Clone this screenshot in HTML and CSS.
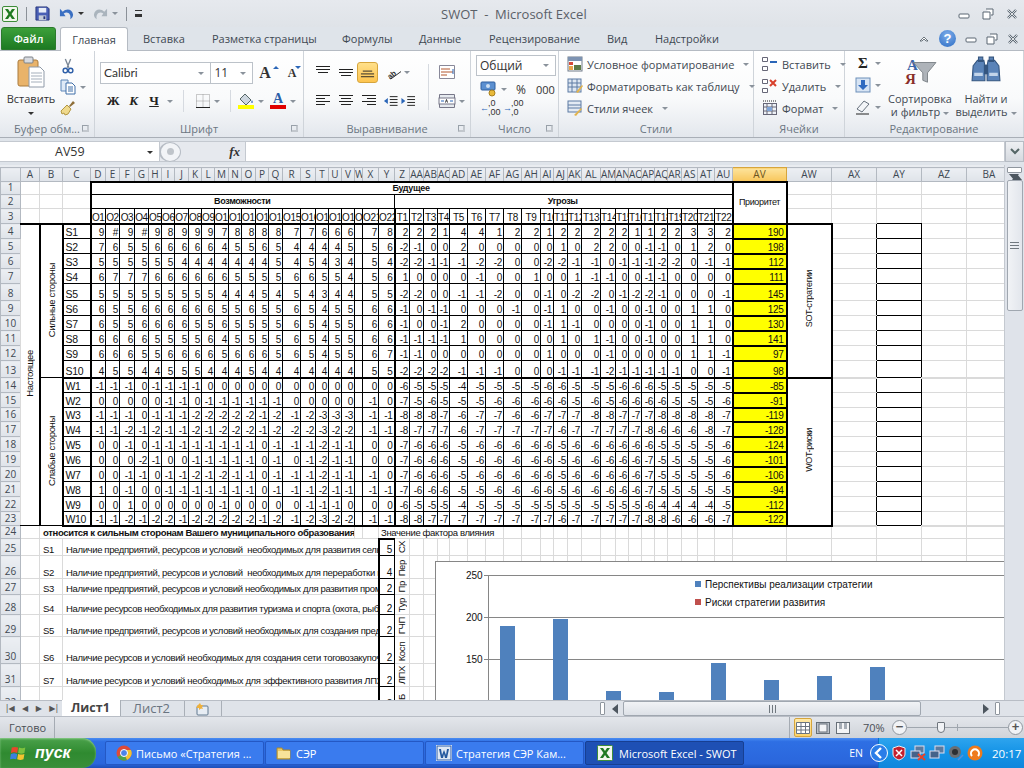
FILE: index.html
```html
<!DOCTYPE html>
<html lang="ru">
<head>
<meta charset="utf-8">
<title>SWOT - Microsoft Excel</title>
<link rel="stylesheet" href="styles.css">
</head>
<body>
<div class="app">
<header class="titlebar">
  <div class="qat">
    <svg class="xl" viewBox="0 0 16 16"><rect x=".5" y=".5" width="15" height="15" rx="1.5" fill="#f2f7ee" stroke="#3d8c3a"/><path d="M3 3h3l2 3 2-3h3l-3.500 5L13 13h-3l-2-3-2 3H3l3.500-5z" fill="#1f7a22"/></svg>
    <i class="qsep"></i>
    <svg class="ic14" viewBox="0 0 16 16"><path d="M1 1h12l2 2v12H1z" fill="#4a5fb5" stroke="#27357c"/><rect x="4" y="2" width="8" height="5" fill="#e9eef8"/><rect x="4" y="10" width="8" height="5" fill="#c6ccd8"/><rect x="9" y="11" width="2" height="3" fill="#27357c"/></svg>
    <svg class="ic18" viewBox="0 0 18 16"><path d="M5 6c4-4 10-3 11 3 0 2-1 4-3 5 1-4-1-7-4-7-1 0-2 .5-3 1l2 3H2V3z" fill="#3a6fc2"/></svg>
    <i class="drop dark"></i>
    <svg class="ic18 faded" viewBox="0 0 18 16"><path d="M13 6C9 2 3 3 2 9c0 2 1 4 3 5-1-4 1-7 4-7 1 0 2 .5 3 1l-2 3h6V3z" fill="#aab4bd"/></svg>
    <i class="drop"></i>
    <i class="qsep"></i>
    <span class="qmore"></span>
  </div>
  <div class="wintitle">SWOT&nbsp; -&nbsp; Microsoft Excel</div>
  <div class="winbtns">
    <svg viewBox="0 0 12 12"><rect x="1" y="6" width="10" height="4" rx="1" fill="#fff" stroke="#5a6672"/></svg>
    <svg viewBox="0 0 12 12"><path d="M4 1h7v6H9M1 4h7v7H1z" fill="#fff" stroke="#5a6672"/></svg>
    <svg viewBox="0 0 12 12"><path d="M2 2l8 8M10 2l-8 8" stroke="#5a6672" stroke-width="2.400"/><path d="M2 2l8 8M10 2l-8 8" stroke="#fff" stroke-width=".8"/></svg>
  </div>
</header>
<nav class="tabs">
  <span class="file">Файл</span>
  <span class="tab active">Главная</span>
  <span class="tab t1">Вставка</span>
  <span class="tab t2">Разметка страницы</span>
  <span class="tab t3">Формулы</span>
  <span class="tab t4">Данные</span>
  <span class="tab t5">Рецензирование</span>
  <span class="tab t6">Вид</span>
  <span class="tab t7">Надстройки</span>
  <div class="tabright">
    <svg class="caret" viewBox="0 0 10 8"><path d="M1 6l4-4 4 4-2 0-2-2-2 2z" fill="#fff" stroke="#4a5560" stroke-width=".8"/></svg>
    <span class="help">?</span>
    <svg class="smallwin" viewBox="0 0 12 12"><rect x="1" y="5" width="10" height="4" rx="1" fill="#fff" stroke="#5a6672"/></svg>
    <svg class="smallwin" viewBox="0 0 12 12"><path d="M4 1h7v6H9M1 4h7v7H1z" fill="#fff" stroke="#5a6672"/></svg>
    <svg class="smallwin" viewBox="0 0 12 12"><path d="M2 2l8 8M10 2l-8 8" stroke="#5a6672" stroke-width="2.400"/><path d="M2 2l8 8M10 2l-8 8" stroke="#fff" stroke-width=".8"/></svg>
  </div>
</nav>
<section class="ribbon">
  <div class="grp g-clip">
    <div class="body clip">
      <div class="paste">
        <svg class="pasteic" viewBox="0 0 28 32"><rect x="1" y="4" width="20" height="26" rx="2" fill="#e9b36a" stroke="#a97a3c"/><rect x="7" y="1" width="9" height="6" rx="1" fill="#d8dbe0" stroke="#7d8288"/><path d="M12 11h11l4 4v16H12z" fill="#fff" stroke="#8f9aa8"/><path d="M14 17h11M14 20h11M14 23h11M14 26h11" stroke="#a5afbb"/></svg>
        <span class="plabel">Вставить</span>
        <i class="drop dark"></i>
      </div>
      <div class="clipcol">
        <svg class="ic16" viewBox="0 0 16 18"><path d="M5 1l4 10M11 1L7 11" stroke="#7a8796" stroke-width="1.500"/><circle cx="5" cy="14" r="2.500" fill="none" stroke="#2e5fa8" stroke-width="1.600"/><circle cx="11" cy="14" r="2.500" fill="none" stroke="#2e5fa8" stroke-width="1.600"/></svg>
        <div class="row2"><svg class="ic16" viewBox="0 0 16 16"><path d="M1 1h7v11H1z" fill="#dfeaf7" stroke="#5c86b8"/><path d="M6 4h6l3 3v8H6z" fill="#fff" stroke="#3f6ea8"/><path d="M8 8h5M8 10h5M8 12h5" stroke="#3f6ea8"/></svg><i class="drop"></i></div>
        <svg class="ic16" viewBox="0 0 16 16"><path d="M9 6l4-5 2 2-5 4z" fill="#8e6e38"/><path d="M1 11l6-6 4 4-3 5-3 1-1-2-2 1z" fill="#efd98c" stroke="#b39742"/></svg>
      </div>
    </div>
    <div class="glabel">Буфер обм...<b class="launch"></b></div>
  </div>
  <div class="grp g-font">
    <div class="body stack">
      <div class="line">
        <span class="combo fname">Calibri<i class="drop"></i></span>
        <span class="combo fsize">11<i class="drop"></i></span>
        <span class="bigA">A<sup class="up"></sup></span>
        <span class="bigA small">A<sup class="down"></sup></span>
      </div>
      <div class="line l2">
        <span class="fb bb">Ж</span>
        <span class="fb ii">К</span>
        <span class="fb uu">Ч</span><i class="drop"></i>
        <i class="vsep"></i>
        <svg class="ic16 bord" viewBox="0 0 16 16"><path d="M1.500 1.500h13v13h-13zM8 1.500v13M1.500 8h13" fill="none" stroke="#999" stroke-dasharray="1 1"/><path d="M1 14.500h14" stroke="#222"/></svg><i class="drop"></i>
        <i class="vsep"></i>
        <span class="swatch"><svg class="ic16" viewBox="0 0 16 12"><path d="M7 1l6 6-5 5-6-6z" fill="#cdd6df" stroke="#566"/><path d="M14 7c1 2 1 3 0 3s-1-1 0-3z" fill="#2b66b8"/></svg><b class="yel"></b></span><i class="drop"></i>
        <span class="swatch"><span class="colA">A</span><b class="red"></b></span><i class="drop"></i>
      </div>
    </div>
    <div class="glabel">Шрифт<b class="launch"></b></div>
  </div>
  <div class="grp g-align">
    <div class="body aligngrid">
      <svg class="ai" viewBox="0 0 16 16"><path d="M1 2.500h14M1 5.500h14M3 8.500h10" stroke="#222"/></svg>
      <svg class="ai" viewBox="0 0 16 16"><path d="M1 5.500h14M1 8.500h14M3 11.500h10" stroke="#222"/></svg>
      <span class="ai on"><svg viewBox="0 0 16 16"><path d="M3 6.500h10M1 9.500h14M1 12.500h14" stroke="#222"/></svg></span>
      <span class="orient"><svg viewBox="0 0 18 16"><text x="1" y="12" class="ortext" transform="rotate(-40 8 8)">ab</text><path d="M6 15l11-8" stroke="#222"/></svg><i class="drop"></i></span>
      <i class="vsep tall"></i>
      <svg class="wrapic" viewBox="0 0 18 16"><path d="M1.500 1.500h15v13h-15z" fill="#fff" stroke="#889"/><path d="M3 5h9M3 8h12M3 11h6" stroke="#b3562e"/><path d="M15 5v5" stroke="#2b66b8"/></svg>
      <svg class="ai" viewBox="0 0 16 16"><path d="M1 2.500h14M1 5.500h9M1 8.500h14M1 11.500h9" stroke="#222"/></svg>
      <svg class="ai" viewBox="0 0 16 16"><path d="M1 2.500h14M3 5.500h10M1 8.500h14M3 11.500h10" stroke="#222"/></svg>
      <svg class="ai" viewBox="0 0 16 16"><path d="M1 2.500h14M6 5.500h9M1 8.500h14M6 11.500h9" stroke="#222"/></svg>
      <span class="indent"><svg viewBox="0 0 34 16"><path d="M7 3.500h8M7 6.500h8M7 9.500h8M7 12.500h8M25 3.500h8M25 6.500h8M25 9.500h8M25 12.500h8" stroke="#222"/><path d="M1 8l4-3v6zM23 8l-4-3v6z" fill="#2b66b8"/></svg></span>
      <span class="merge"><svg viewBox="0 0 18 16"><path d="M1.500 1.500h15v13h-15z" fill="#e6eaef" stroke="#778"/><rect x="1" y="5" width="16" height="6" fill="#fff" stroke="#778"/><path d="M3 8h3M12 8h3" stroke="#2b66b8"/><path d="M7.500 9.500l1-3 1 3" fill="none" stroke="#333"/></svg><i class="drop"></i></span>
    </div>
    <div class="glabel">Выравнивание<b class="launch"></b></div>
  </div>
  <div class="grp g-num">
    <div class="body stack numstack">
      <span class="combo fmt">Общий<i class="drop"></i></span>
      <div class="line numline">
        <span class="money"><svg class="ic16" viewBox="0 0 16 16"><rect x="1" y="1" width="14" height="8" rx="1" fill="#5b8fd0" stroke="#2f5f9f"/><circle cx="8" cy="5" r="2" fill="#cfe0f2"/><circle cx="12" cy="12" r="3" fill="#e8b93a" stroke="#a9801e"/></svg><i class="drop"></i></span>
        <span class="pct">%</span>
        <span class="thou">000</span>
      </div>
      <div class="line decs">
        <span class="dec"><em class="arrw">←</em><span class="dnum">,0<br>,00</span></span>
        <span class="dec"><em class="arrw">→</em><span class="dnum">,00<br>,0</span></span>
      </div>
    </div>
    <div class="glabel">Число<b class="launch"></b></div>
  </div>
  <div class="grp g-styles">
    <div class="body list">
      <div class="item"><svg class="ic16" viewBox="0 0 16 16"><rect x="1" y="1" width="14" height="14" fill="#fff" stroke="#6f7a88"/><rect x="1" y="1" width="14" height="4" fill="#7d93b2"/><rect x="2" y="6" width="4" height="3" fill="#d64a3a"/><rect x="2" y="10" width="4" height="4" fill="#e9a64a"/><rect x="7" y="9" width="7" height="5" fill="#5c7a47"/></svg>Условное форматирование<i class="drop"></i></div>
      <div class="item"><svg class="ic16" viewBox="0 0 16 16"><rect x="1" y="1" width="13" height="13" fill="#dde6f1" stroke="#5d7ba3"/><path d="M1 5h13M1 9h13M5 1v13M10 1v13" stroke="#5d7ba3"/><path d="M9 14l6-7 1 1-5 7z" fill="#e3b44c"/></svg>Форматировать как таблицу<i class="drop"></i></div>
      <div class="item"><svg class="ic16" viewBox="0 0 16 16"><rect x="1" y="1" width="13" height="11" fill="#e3eaf3" stroke="#5d7ba3"/><path d="M1 5h13M1 8h13" stroke="#5d7ba3"/><path d="M7 15l7-7 1 1-6 7z" fill="#e3b44c"/></svg>Стили ячеек<i class="drop"></i></div>
    </div>
    <div class="glabel">Стили</div>
  </div>
  <div class="grp g-cells">
    <div class="body list">
      <div class="item"><svg class="ic16" viewBox="0 0 16 16"><path d="M.5 1.500h5v4h-5zM.5 10.500h5v4h-5z" fill="#fff" stroke="#667"/><path d="M8 6h7" stroke="#2b66b8" stroke-width="2"/></svg>Вставить<i class="drop"></i></div>
      <div class="item"><svg class="ic16" viewBox="0 0 16 16"><path d="M.5 1.500h5v4h-5zM.5 10.500h5v4h-5z" fill="#fff" stroke="#667"/><path d="M8 2l6 6M14 2L8 8" stroke="#d8402c" stroke-width="2"/></svg>Удалить<i class="drop"></i></div>
      <div class="item"><svg class="ic16" viewBox="0 0 16 16"><rect x="1.500" y="3.500" width="13" height="11" fill="#eef2f7" stroke="#667"/><path d="M5 3v12M10 3v12M1 7h14M1 11h14" stroke="#667"/><path d="M1 1h14" stroke="#222" stroke-dasharray="1 1"/><rect x="5" y="7" width="5" height="4" fill="#7fa5d8"/></svg>Формат<i class="drop"></i></div>
    </div>
    <div class="glabel">Ячейки</div>
  </div>
  <div class="grp g-edit">
    <div class="body editbody">
      <div class="clipcol editcol">
        <div class="row2"><span class="sigma">Σ</span><i class="drop"></i></div>
        <div class="row2"><svg class="ic16" viewBox="0 0 16 16"><rect x="1" y="1" width="14" height="14" fill="#d7e4f4" stroke="#6d8fb9"/><path d="M6 3h4v5h3l-5 5-5-5h3z" fill="#2f6ac0"/></svg><i class="drop"></i></div>
        <div class="row2"><svg class="ic16" viewBox="0 0 16 16"><path d="M2 10l7-8 5 3-7 8z" fill="#f3f5f8" stroke="#66707c"/><path d="M1 15h13" stroke="#222"/></svg><i class="drop"></i></div>
      </div>
      <div class="bigbtn">
        <svg class="bigic" viewBox="0 0 34 32"><text x="3" y="16" class="sort a">А</text><text x="1" y="31" class="sort y">Я</text><path d="M10 8h24l-9 11v10l-5-2V19z" fill="#aeb3b9" stroke="#7c8288"/></svg>
        <span class="bl">Сортировка<br>и фильтр<i class="drop"></i></span>
      </div>
      <div class="bigbtn">
        <svg class="bigic" viewBox="0 0 30 28"><path d="M8 2h4v4H8zM18 2h4v4h-4zM3 10l4-5h6l1 5v14H2zM27 10l-4-5h-6l-1 5v14h12z" fill="#5a83b8" stroke="#34557f"/><rect x="13" y="9" width="4" height="9" fill="#34557f"/><path d="M4 18h8M18 18h8" stroke="#c3d5ea" stroke-width="3"/></svg>
        <span class="bl">Найти и<br>выделить<i class="drop"></i></span>
      </div>
    </div>
    <div class="glabel">Редактирование</div>
  </div>
</section>
<div class="fbar">
  <div class="namebox">AV59<i class="drop dark"></i></div>
  <div class="fxzone"><span class="pill"><i></i></span><em class="fx">fx</em></div>
  <div class="finput"></div>
  <div class="fexp"><svg viewBox="0 0 10 8"><path d="M1 1l4 4 4-4" fill="none" stroke="#566" stroke-width="2"/></svg></div>
</div>
<main class="sheet">
<div class="gridwrap">
<table class="grid">
<colgroup>
<col class="w20"><col class="w19"><col class="w23"><col class="w28">
<col class="w15"><col class="w14"><col class="w15"><col class="w14"><col class="w13"><col class="w13"><col class="w14"><col class="w13"><col class="w13"><col class="w14"><col class="w13"><col class="w14"><col class="w13"><col class="w14"><col class="w18"><col class="w15"><col class="w13"><col class="w13"><col class="w13"><col class="w8"><col class="w16"><col class="w16">
<col class="w15"><col class="w14"><col class="w14"><col class="w12"><col class="w18"><col class="w18"><col class="w18"><col class="w18"><col class="w19"><col class="w13"><col class="w14"><col class="w14"><col class="w19"><col class="w15"><col class="w13"><col class="w13"><col class="w13"><col class="w13"><col class="w14"><col class="w16"><col class="w17"><col class="w18">
<col class="w54"><col class="w45"><col class="w45"><col class="w45"><col class="w45"><col class="w45">
</colgroup>
<thead>
<tr class="h14"><th class="corner"><th>A<th>B<th>C<th>D<th>E<th>F<th>G<th>H<th>I<th>J<th>K<th>L<th>M<th>N<th>O<th>P<th>Q<th>R<th>S<th>T<th>U<th>V<th>W<th>X<th>Y<th>Z<th>AA<th>AB<th>AC<th>AD<th>AE<th>AF<th>AG<th>AH<th>AI<th>AJ<th>AK<th>AL<th>AM<th>AN<th>AO<th>AP<th>AQ<th>AR<th>AS<th>AT<th>AU<th class="sel">AV<th>AW<th>AX<th>AY<th>AZ<th>BA</tr>
</thead>
<tbody>
<tr class="h13"><th>1<td class="g"><td class="g"><td class="g"><td colspan="44" class="head l top">Будущее<td rowspan="3" class="pri">Приоритет<td class="g"><td class="g"><td class="g"><td class="g"><td class="g"></tr>
<tr class="h14"><th>2<td class="g"><td class="g"><td class="g"><td colspan="22" class="head l">Возможности<td colspan="22" class="head">Угрозы<td class="g"><td class="g"><td class="g"><td class="g"><td class="g"></tr>
<tr class="h15 r3"><th>3<td class="g kb"><td class="g kb"><td class="g kb"><td class="c l">O1<td class="c">O2<td class="c">O3<td class="c">O4<td class="c">O5<td class="c">O6<td class="c">O7<td class="c">O8<td class="c">O9<td class="c">O10<td class="c">O11<td class="c">O12<td class="c">O13<td class="c">O14<td class="c">O15<td class="c">O16<td class="c">O17<td class="c">O18<td class="c">O19<td class="c">O20<td class="c">O21<td class="c">O22<td class="c l">T1<td class="c">T2<td class="c">T3<td class="c">T4<td class="c">T5<td class="c">T6<td class="c">T7<td class="c">T8<td class="c">T9<td class="c">T10<td class="c">T11<td class="c">T12<td class="c">T13<td class="c">T14<td class="c">T15<td class="c">T16<td class="c">T17<td class="c">T18<td class="c">T19<td class="c">T20<td class="c">T21<td class="c">T22<td class="g kb"><td class="g"><td class="g tb"><td class="g"><td class="g"></tr>
<tr class="h15"><th>4<td rowspan="20" class="side nol"><span class="rot">Настоящее</span><td rowspan="10" class="side"><span class="rot">Сильные стороны</span><td class="s">S1<td class="l">9<td>#<td>9<td>#<td>9<td>8<td>9<td>9<td>9<td>7<td>8<td>8<td>8<td>8<td>7<td>7<td>6<td>6<td>6<td><td>7<td>8<td class="l">2<td>2<td>2<td>1<td>4<td>4<td>1<td>2<td>2<td>1<td>2<td>2<td>2<td>2<td>2<td>1<td>1<td>2<td>2<td>3<td>3<td>2<td class="v">190<td rowspan="10" class="strat"><span class="rot">SOT-стратегии</span><td class="g xr"><td class="box"><td class="g"><td class="g"></tr>
<tr class="h15"><th>5<td class="s">S2<td class="l">7<td>6<td>5<td>5<td>6<td>6<td>6<td>6<td>6<td>4<td>5<td>5<td>6<td>5<td>4<td>4<td>4<td>4<td>5<td><td>5<td>6<td class="l">-2<td>-1<td>0<td>0<td>2<td>0<td>0<td>0<td>0<td>0<td>1<td>0<td>2<td>2<td>0<td>0<td>-1<td>-1<td>0<td>1<td>2<td>0<td class="v">198<td class="g xr"><td class="box"><td class="g"><td class="g"></tr>
<tr class="h15"><th>6<td class="s">S3<td class="l">5<td>5<td>5<td>5<td>5<td>5<td>4<td>4<td>4<td>4<td>4<td>4<td>4<td>5<td>4<td>5<td>4<td>3<td>4<td><td>5<td>4<td class="l">-2<td>-2<td>-1<td>-1<td>-1<td>-2<td>-2<td>0<td>0<td>-2<td>-2<td>-1<td>-1<td>0<td>-1<td>-1<td>-1<td>-2<td>-2<td>0<td>-1<td>-1<td class="v">112<td class="g xr"><td class="box"><td class="g"><td class="g"></tr>
<tr class="h15"><th>7<td class="s">S4<td class="l">6<td>7<td>7<td>7<td>6<td>6<td>6<td>6<td>6<td>6<td>5<td>5<td>5<td>5<td>6<td>6<td>5<td>5<td>4<td><td>5<td>6<td class="l">1<td>0<td>0<td>0<td>0<td>-1<td>0<td>0<td>1<td>0<td>0<td>1<td>-1<td>-1<td>0<td>0<td>-1<td>-1<td>0<td>0<td>0<td>0<td class="v">111<td class="g xr"><td class="box"><td class="g"><td class="g"></tr>
<tr class="h17"><th>8<td class="s">S5<td class="l">5<td>5<td>5<td>5<td>5<td>5<td>5<td>5<td>5<td>4<td>4<td>4<td>5<td>4<td>5<td>4<td>3<td>4<td>4<td><td>5<td>5<td class="l">-2<td>-2<td>0<td>0<td>-1<td>-1<td>-2<td>0<td>0<td>-1<td>0<td>-2<td>-2<td>0<td>-1<td>-2<td>-2<td>-1<td>0<td>0<td>0<td>-1<td class="v">145<td class="g xr"><td class="box"><td class="g"><td class="g"></tr>
<tr class="h15"><th>9<td class="s">S6<td class="l">6<td>5<td>5<td>6<td>6<td>6<td>6<td>6<td>6<td>5<td>5<td>6<td>5<td>5<td>6<td>5<td>4<td>5<td>5<td><td>6<td>6<td class="l">-1<td>0<td>-1<td>-1<td>0<td>0<td>0<td>-1<td>0<td>-1<td>1<td>0<td>0<td>-1<td>0<td>0<td>-1<td>0<td>0<td>1<td>1<td>0<td class="v">125<td class="g xr"><td class="box"><td class="g"><td class="g"></tr>
<tr class="h15"><th>10<td class="s">S7<td class="l">6<td>5<td>5<td>6<td>6<td>6<td>6<td>5<td>5<td>6<td>5<td>5<td>5<td>5<td>6<td>5<td>4<td>5<td>5<td><td>6<td>6<td class="l">-1<td>0<td>0<td>-1<td>2<td>0<td>0<td>0<td>0<td>-1<td>1<td>-1<td>0<td>0<td>0<td>0<td>-1<td>0<td>0<td>1<td>1<td>0<td class="v">130<td class="g xr"><td class="box"><td class="g"><td class="g"></tr>
<tr class="h15"><th>11<td class="s">S8<td class="l">6<td>6<td>6<td>6<td>5<td>5<td>5<td>5<td>6<td>4<td>5<td>5<td>5<td>5<td>6<td>5<td>4<td>5<td>5<td><td>6<td>6<td class="l">-1<td>-1<td>-1<td>-1<td>1<td>0<td>0<td>0<td>0<td>0<td>1<td>0<td>1<td>-1<td>0<td>0<td>-1<td>0<td>0<td>1<td>1<td>0<td class="v">141<td class="g xr"><td class="box"><td class="g"><td class="g"></tr>
<tr class="h15"><th>12<td class="s">S9<td class="l">6<td>6<td>6<td>5<td>5<td>6<td>6<td>6<td>6<td>5<td>6<td>6<td>6<td>5<td>6<td>5<td>4<td>5<td>5<td><td>6<td>7<td class="l">-1<td>-1<td>0<td>0<td>0<td>0<td>0<td>0<td>0<td>1<td>0<td>0<td>0<td>-1<td>0<td>0<td>0<td>0<td>0<td>1<td>1<td>-1<td class="v">97<td class="g xr"><td class="box"><td class="g"><td class="g"></tr>
<tr class="h17 sep"><th>13<td class="s">S10<td class="l">4<td>5<td>5<td>4<td>4<td>5<td>5<td>5<td>4<td>4<td>4<td>5<td>4<td>4<td>4<td>4<td>4<td>4<td>4<td><td>5<td>5<td class="l">-2<td>-2<td>-2<td>-2<td>-1<td>-1<td>-1<td>0<td>0<td>0<td>-1<td>-1<td>-1<td>-2<td>-1<td>-1<td>-1<td>-1<td>-1<td>0<td>0<td>-1<td class="v">98<td class="g xr"><td class="box"><td class="g"><td class="g"></tr>
<tr class="h15"><th>14<td rowspan="10" class="side"><span class="rot">Слабые стороны</span><td class="s">W1<td class="l">-1<td>-1<td>-1<td>0<td>-1<td>-1<td>-1<td>-1<td>0<td>0<td>0<td>0<td>0<td>0<td>0<td>0<td>0<td>0<td>0<td><td>0<td>0<td class="l">-6<td>-5<td>-5<td>-5<td>-4<td>-5<td>-5<td>-5<td>-5<td>-6<td>-6<td>-5<td>-5<td>-5<td>-6<td>-6<td>-6<td>-5<td>-5<td>-5<td>-5<td>-5<td class="v">-85<td rowspan="10" class="strat"><span class="rot">WOT-риски</span><td class="g xr"><td class="box"><td class="g"><td class="g"></tr>
<tr class="h15"><th>15<td class="s">W2<td class="l">0<td>0<td>0<td>0<td>0<td>-1<td>-1<td>0<td>-1<td>-1<td>-1<td>-1<td>-1<td>-1<td>0<td>0<td>0<td>0<td>0<td><td>-1<td>0<td class="l">-7<td>-5<td>-6<td>-5<td>-5<td>-5<td>-6<td>-6<td>-6<td>-6<td>-6<td>-5<td>-6<td>-5<td>-6<td>-6<td>-6<td>-6<td>-5<td>-5<td>-5<td>-6<td class="v">-91<td class="g xr"><td class="box"><td class="g"><td class="g"></tr>
<tr class="h14"><th>16<td class="s">W3<td class="l">-1<td>-1<td>-1<td>0<td>-1<td>-1<td>-1<td>-2<td>-2<td>-2<td>-2<td>-2<td>-1<td>-2<td>-1<td>-2<td>-3<td>-3<td>-3<td><td>-1<td>-1<td class="l">-8<td>-8<td>-8<td>-7<td>-6<td>-7<td>-7<td>-6<td>-6<td>-7<td>-7<td>-7<td>-8<td>-8<td>-7<td>-7<td>-7<td>-8<td>-8<td>-8<td>-8<td>-7<td class="v">-119<td class="g xr"><td class="box"><td class="g"><td class="g"></tr>
<tr class="h15"><th>17<td class="s">W4<td class="l">-1<td>-1<td>-2<td>-1<td>-2<td>-1<td>-1<td>-2<td>-1<td>-2<td>-2<td>-2<td>-1<td>-2<td>-2<td>-2<td>-3<td>-2<td>-2<td><td>-1<td>-1<td class="l">-8<td>-7<td>-7<td>-7<td>-6<td>-7<td>-7<td>-7<td>-7<td>-7<td>-6<td>-7<td>-7<td>-7<td>-7<td>-7<td>-8<td>-6<td>-6<td>-6<td>-8<td>-7<td class="v">-128<td class="g xr"><td class="box"><td class="g"><td class="g"></tr>
<tr class="h15"><th>18<td class="s">W5<td class="l">0<td>0<td>-1<td>0<td>-1<td>-1<td>-1<td>-1<td>-1<td>-1<td>-1<td>-1<td>0<td>-1<td>-1<td>-1<td>-2<td>-1<td>-1<td><td>0<td>0<td class="l">-7<td>-6<td>-6<td>-6<td>-5<td>-6<td>-6<td>-6<td>-6<td>-6<td>-5<td>-6<td>-6<td>-6<td>-6<td>-6<td>-6<td>-5<td>-5<td>-5<td>-5<td>-6<td class="v">-124<td class="g xr"><td class="box"><td class="g"><td class="g"></tr>
<tr class="h15"><th>19<td class="s">W6<td class="l">0<td>0<td>0<td>-2<td>-1<td>0<td>0<td>-1<td>-1<td>-1<td>-1<td>-1<td>0<td>-1<td>0<td>-1<td>-2<td>-1<td>-1<td><td>0<td>0<td class="l">-7<td>-6<td>-6<td>-6<td>-5<td>-6<td>-6<td>-6<td>-6<td>-6<td>-5<td>-6<td>-6<td>-6<td>-6<td>-6<td>-7<td>-5<td>-5<td>-5<td>-5<td>-6<td class="v">-101<td class="g xr"><td class="box"><td class="g"><td class="g"></tr>
<tr class="h15"><th>20<td class="s">W7<td class="l">0<td>0<td>-1<td>-1<td>0<td>-1<td>-1<td>-2<td>-1<td>-2<td>-1<td>-1<td>0<td>-1<td>-1<td>-1<td>-2<td>-1<td>-1<td><td>-1<td>0<td class="l">-7<td>-6<td>-6<td>-6<td>-5<td>-6<td>-6<td>-6<td>-6<td>-6<td>-5<td>-6<td>-6<td>-6<td>-6<td>-6<td>-7<td>-5<td>-5<td>-5<td>-5<td>-6<td class="v">-106<td class="g xr"><td class="box"><td class="g"><td class="g"></tr>
<tr class="h15"><th>21<td class="s">W8<td class="l">1<td>0<td>-1<td>0<td>0<td>-1<td>-1<td>-1<td>-1<td>-1<td>-1<td>-1<td>0<td>-1<td>-1<td>-1<td>-2<td>-1<td>-1<td><td>-1<td>-1<td class="l">-7<td>-6<td>-6<td>-6<td>-5<td>-5<td>-6<td>-6<td>-6<td>-6<td>-5<td>-6<td>-6<td>-6<td>-6<td>-6<td>-7<td>-5<td>-5<td>-5<td>-5<td>-5<td class="v">-94<td class="g xr"><td class="box"><td class="g"><td class="g"></tr>
<tr class="h15"><th>22<td class="s">W9<td class="l">0<td>0<td>1<td>0<td>0<td>0<td>0<td>0<td>0<td>-1<td>0<td>0<td>0<td>0<td>0<td>-1<td>-1<td>-1<td>0<td><td>0<td>0<td class="l">-6<td>-5<td>-5<td>-5<td>-4<td>-5<td>-5<td>-5<td>-5<td>-5<td>-5<td>-5<td>-5<td>-5<td>-5<td>-5<td>-6<td>-4<td>-4<td>-4<td>-4<td>-5<td class="v">-112<td class="g xr"><td class="box"><td class="g"><td class="g"></tr>
<tr class="h14 sep"><th>23<td class="s">W10<td class="l">-1<td>-1<td>-2<td>-1<td>-2<td>-2<td>-1<td>-2<td>-2<td>-2<td>-2<td>-2<td>-1<td>-2<td>-1<td>-2<td>-3<td>-2<td>-2<td><td>-1<td>-1<td class="l">-8<td>-8<td>-7<td>-7<td>-7<td>-7<td>-7<td>-7<td>-7<td>-7<td>-6<td>-7<td>-7<td>-7<td>-7<td>-7<td>-8<td>-8<td>-6<td>-6<td>-6<td>-7<td class="v">-122<td class="g xr"><td class="box"><td class="g"><td class="g"></tr>
<tr class="h13"><th>24<td class="g"><td colspan="21" class="g q">относится к сильным сторонам Вашего муниципального образования?<td class="g"><td class="g"><td colspan="8" class="g zn">Значение фактора влияния<td class="g"><td class="g"><td class="g"><td class="g"><td class="g"><td class="g"><td class="g"><td class="g"><td class="g"><td class="g"><td class="g"><td class="g"><td class="g"><td class="g"><td class="g"><td class="g"><td class="g"><td class="g"><td class="g"><td class="g"><td class="g"></tr>
<tr class="h17"><th>25<td class="g"><td class="g t">S1<td colspan="22" class="g t long">Наличие предприятий, ресурсов и условий&nbsp; необходимых для развития сельского хозяйства<td class="num first">5<td class="g vt"><span class="rot">СХ</span><td class="g"><td class="g"><td class="g"><td class="g"><td class="g"><td class="g"><td class="g"><td class="g"><td class="g"><td class="g"><td class="g"><td class="g"><td class="g"><td class="g"><td class="g"><td class="g"><td class="g"><td class="g"><td class="g"><td class="g"><td class="g"><td class="g"><td class="g"><td class="g"><td class="g"><td class="g"><td class="g"><td class="g"><td class="g"></tr>
<tr class="h23"><th>26<td class="g"><td class="g t">S2<td colspan="22" class="g t long">Наличие предприятий, ресурсов и условий&nbsp; необходимых для переработки продукции<td class="num">4<td class="g vt"><span class="rot">Пер</span><td class="g"><td class="g"><td class="g"><td class="g"><td class="g"><td class="g"><td class="g"><td class="g"><td class="g"><td class="g"><td class="g"><td class="g"><td class="g"><td class="g"><td class="g"><td class="g"><td class="g"><td class="g"><td class="g"><td class="g"><td class="g"><td class="g"><td class="g"><td class="g"><td class="g"><td class="g"><td class="g"><td class="g"></tr>
<tr class="h16"><th>27<td class="g"><td class="g t">S3<td colspan="22" class="g t long">Наличие предприятий, ресурсов и условий необходимых для развития промышленности<td class="num">2<td class="g vt"><span class="rot">Пр</span><td class="g"><td class="g"><td colspan="26" class="g"></tr>
<tr class="h20"><th>28<td class="g"><td class="g t">S4<td colspan="22" class="g t long">Наличие ресурсов необходимых для развития туризма и спорта (охота, рыбалка)<td class="num">2<td class="g vt"><span class="rot">Тур</span><td class="g"><td class="g"><td colspan="26" class="g"></tr>
<tr class="h22"><th>29<td class="g"><td class="g t">S5<td colspan="22" class="g t long">Наличие предприятий, ресурсов и условий необходимых для создания предприятий<td class="num">2<td class="g vt"><span class="rot">ГЧП</span><td class="g"><td class="g"><td colspan="26" class="g"></tr>
<tr class="h27"><th>30<td class="g"><td class="g t">S6<td colspan="22" class="g t long">Наличие ресурсов и условий необходимых для создания сети тоговозакупочных кооперативов<td class="num">2<td class="g vt"><span class="rot">Косп</span><td class="g"><td class="g"><td colspan="26" class="g"></tr>
<tr class="h23"><th>31<td class="g"><td class="g t">S7<td colspan="22" class="g t long">Наличие ресурсов и условий необходимых для эффективного развития ЛПХ и фермерских хозяйств<td class="num">2<td class="g vt"><span class="rot">ЛПХ</span><td class="g"><td class="g"><td colspan="26" class="g"></tr>
<tr class="h23"><th>32<td class="g"><td class="g t">S8<td colspan="22" class="g t long">Наличие ресурсов и условий необходимых для эффективного развития предпринимательства<td class="num">2<td class="g vt"><span class="rot">МБ</span><td class="g"><td class="g"><td colspan="26" class="g"></tr>
</tbody>
</table>
<figure class="chart">
<svg class="chartsvg" viewBox="0 0 620 140">
<path class="gl" d="M52 13.500H620M52 55.500H620M52 97.500H620M52 139.500H620M52.500 13V140"/>
<path class="gl" d="M48 13.500h4M48 55.500h4M48 97.500h4"/>
<rect class="bar" x="64" y="64" width="15" height="80"/>
<rect class="bar" x="117" y="57" width="15" height="87"/>
<rect class="bar" x="170" y="129" width="15" height="14"/>
<rect class="bar" x="223" y="130" width="15" height="13"/>
<rect class="bar" x="275" y="101" width="15" height="42"/>
<rect class="bar" x="328" y="118" width="15" height="25"/>
<rect class="bar" x="381" y="114" width="15" height="29"/>
<rect class="bar" x="434" y="105" width="15" height="38"/>
<text class="ax" x="30" y="17">250</text>
<text class="ax" x="30" y="59">200</text>
<text class="ax" x="30" y="101">150</text>
<rect class="bar" x="259" y="19" width="6" height="6"/>
<rect class="bar2" x="259" y="37" width="6" height="6"/>
<text class="ax" x="269" y="26">Перспективы реализации стратегии</text>
<text class="ax" x="269" y="44">Риски стратегии развития</text>
</svg>
</figure>
</div>
<aside class="vscroll">
  <b class="split"></b>
  <span class="arrow up"></span>
  <div class="thumb"><i></i></div>
  <span class="arrow down"></span>
</aside>
</main>
<div class="sheetbar">
  <div class="tabnav"><span>|◀</span><span>◀</span><span>▶</span><span>▶|</span></div>
  <div class="sheettabs">
    <span class="st on">Лист1</span>
    <span class="st">Лист2</span>
    <span class="st add"><svg viewBox="0 0 16 14"><rect x="4" y="4" width="11" height="9" rx="1" fill="#e7edf4" stroke="#61788f"/><path d="M4 4l3-3 1 2 2 0-1 2 1 2-2-.5L6 8V6H3l1-1z" fill="#efb13c"/></svg></span>
  </div>
  <div class="hscroll">
    <b class="hsplit"></b>
    <span class="harrow left"></span>
    <div class="hthumb"><i></i></div>
    <span class="harrow right"></span>
    <b class="hsplit"></b>
  </div>
</div>
<footer class="status">
  <span class="ready">Готово</span>
  <div class="statright">
    <span class="vb on"><svg viewBox="0 0 14 12"><path d="M.5.500h13v11H.5zM.5 4.500h13M.5 8h13M5 .5v11M9.500.500v11" fill="#fff" stroke="#6a7480"/></svg></span>
    <span class="vb"><svg viewBox="0 0 14 12"><rect x=".5" y=".5" width="13" height="11" fill="#bcc2ca" stroke="#666f78"/><rect x="3" y="2" width="8" height="8" fill="#f3f4f6" stroke="#666f78"/></svg></span>
    <span class="vb"><svg viewBox="0 0 14 12"><rect x=".5" y=".5" width="13" height="11" fill="#f3f4f6" stroke="#666f78"/><rect x="3" y="1" width="3" height="6" fill="#a5acb5"/><rect x="8" y="1" width="3" height="6" fill="#a5acb5"/></svg></span>
    <span class="zoomv">70%</span>
    <span class="zb">−</span>
    <span class="slider"><i class="mid"></i><i class="knob"></i></span>
    <span class="zb">+</span>
  </div>
</footer>
<div class="taskbar">
  <div class="start"><svg viewBox="0 0 20 20"><path d="M2 4c3-1 4-1 7 0l-1 6c-3-1-4-1-7 0z" fill="#e8472c"/><path d="M10 4c3 1 4 1 7 0l-1 6c-3 1-4 1-7 0z" fill="#7cc13e"/><path d="M1 11c3-1 4-1 7 0l-1 6c-3-1-4-1-7 0z" fill="#3b7fe0"/><path d="M9 11c3 1 4 1 7 0l-1 6c-3 1-4 1-7 0z" fill="#f4c430"/></svg><em>пуск</em></div>
  <div class="tasks">
    <div class="task"><svg viewBox="0 0 16 16"><circle cx="8" cy="8" r="7.500" fill="#dd4b3a"/><path d="M8 8L1.500 12A7.500 7.500 0 0 0 11 15z" fill="#4ba34a"/><path d="M8 8l3 7A7.500 7.500 0 0 0 15 5H8z" fill="#f2c230"/><circle cx="8" cy="8" r="3.500" fill="#4b84e8" stroke="#fff"/></svg>Письмо «Стратегия ...</div>
    <div class="task"><svg viewBox="0 0 16 16"><path d="M1 3h5l1 2h7v9H1z" fill="#e9c766" stroke="#a98a30"/><path d="M2 6h12v7H2z" fill="#f7e39a"/></svg>СЭР</div>
    <div class="task"><svg viewBox="0 0 16 16"><rect width="16" height="16" fill="#fff"/><rect x="1" y="1" width="14" height="14" fill="#dfe8f5" stroke="#2a5caa"/><path d="M3 4h2l1 6 2-5 2 5 1-6h2l-2 9H9L8 9l-1 4H5z" fill="#24589f"/></svg>Стратегия СЭР Кам...</div>
    <div class="task active"><svg viewBox="0 0 16 16"><rect x=".5" y=".5" width="15" height="15" rx="1" fill="#f2f7ee" stroke="#3d8c3a"/><path d="M3 3h3l2 3 2-3h3l-3.500 5L13 13h-3l-2-3-2 3H3l3.500-5z" fill="#1f7a22"/></svg>Microsoft Excel - SWOT</div>
  </div>
  <span class="lang">EN</span>
  <div class="tray">
    <span class="back"><svg viewBox="0 0 18 18"><circle cx="9" cy="9" r="8.500" fill="#2a7de8" stroke="#fff"/><path d="M11 4L6 9l5 5" fill="none" stroke="#fff" stroke-width="2.400"/></svg></span>
    <svg class="trayic" viewBox="0 0 16 16"><path d="M8 1l6 2v6c0 3-3 5-6 6-3-1-6-3-6-6V3z" fill="#c4202e" stroke="#eee"/><path d="M5 5l6 6M11 5l-6 6" stroke="#fff" stroke-width="1.500"/></svg>
    <svg class="trayic" viewBox="0 0 16 16"><rect x="5" y="1" width="9" height="7" fill="#5a7a9f" stroke="#dde"/><rect x="1" y="6" width="9" height="7" fill="#45638a" stroke="#dde"/><path d="M8 9l7 6M15 9l-7 6" stroke="#e8432a" stroke-width="2"/></svg>
    <svg class="trayic" viewBox="0 0 16 16"><rect x="6" y="1" width="9" height="7" fill="#5a7a9f" stroke="#dde"/><rect x="1" y="6" width="9" height="7" fill="#45638a" stroke="#dde"/></svg>
    <svg class="trayic" viewBox="0 0 16 16"><circle cx="7" cy="7" r="6" fill="#6a6e73"/><circle cx="7" cy="7" r="3" fill="#2c2f33"/><path d="M10 15l5-5" stroke="#5b8fd8" stroke-width="1.500"/></svg>
    <svg class="trayic" viewBox="0 0 16 16"><circle cx="8" cy="8" r="7.500" fill="#ee7a1d"/><path d="M5 11a4 4 0 1 1 6 0" fill="none" stroke="#fff" stroke-width="2"/></svg>
    <span class="clock">20:17</span>
  </div>
</div>
</div>
</body>
</html>
```
FILE: styles.css
```css
* { box-sizing: border-box; }
html, body { margin: 0; padding: 0; }
body { width: 1024px; height: 768px; overflow: hidden; font-family: "Open Sans", "Noto Sans", sans-serif; font-size: 12px; color: #3c4650; }
.app { width: 1024px; height: 768px; display: flex; flex-direction: column; background: #dfe4ea; }
i, b, em { display: inline-block; font-style: normal; }

/* title */
.titlebar { height: 27px; flex: none; display: flex; align-items: center; position: relative; background: linear-gradient(#e6e9ee, #dfe3e8); }
.qat { display: flex; align-items: center; gap: 3px; padding-left: 2px; }
.xl { width: 16px; height: 16px; }
.qsep { width: 1px; height: 14px; background: #8b9198; margin: 0 5px; }
.ic14 { width: 15px; height: 15px; }
.ic18 { width: 17px; height: 15px; margin-left: 5px; }
.ic16 { width: 16px; height: 16px; flex: none; }
.drop { width: 0; height: 0; border: 3px solid transparent; border-top: 3px solid #8a929b; border-bottom: 0; flex: none; vertical-align: middle; }
.drop.dark { border-top-color: #333; }
.qmore { width: 7px; height: 7px; border-top: 1px solid #333; border-bottom: 3px solid #333; }
.wintitle { position: absolute; left: 441px; top: 5px; font-size: 13px; color: #5a6068; white-space: nowrap; }
.winbtns { margin-left: auto; display: flex; gap: 12px; padding-right: 6px; }
.winbtns svg { width: 12px; height: 12px; }

/* tabs */
.tabs { height: 24px; flex: none; position: relative; background: #dfe4ea; border-bottom: 1px solid #b5bbc3; display: flex; }
.tab, .file { position: absolute; bottom: -1px; font-size: 11px; line-height: 23px; height: 24px; color: #3e4852; white-space: nowrap; }
.file { left: 1px; width: 55px; text-align: center; bottom: 0; height: 23px; color: #fff; background: linear-gradient(#3ca03a, #1d7a22); border-radius: 3px 3px 0 0; border: 1px solid #2b7a2c; line-height: 21px; font-weight: 600; }
.active { left: 60px; width: 68px; text-align: center; background: #fff; border: 1px solid #b5bbc3; border-bottom: 0; border-radius: 3px 3px 0 0; }
.t1 { left: 143px; } .t2 { left: 212px; } .t3 { left: 342px; } .t4 { left: 419px; } .t5 { left: 489px; } .t6 { left: 607px; } .t7 { left: 655px; }
.tabright { margin-left: auto; display: flex; align-items: center; gap: 9px; padding-right: 5px; }
.caret { width: 10px; height: 8px; margin-right: 1px; }
.help { width: 17px; height: 17px; border-radius: 50%; background: radial-gradient(circle at 50% 30%, #7faeea, #2b6cc4); color: #fff; font: bold 13px/17px "Liberation Sans", sans-serif; text-align: center; }
.smallwin { width: 12px; height: 12px; }

/* ribbon */
.ribbon { height: 87px; flex: none; display: flex; background: linear-gradient(#ffffff 0, #f9fafb 55%, #e3e7ed 100%); border-bottom: 1px solid #a9afb7; }
.grp { display: flex; flex-direction: column; border-right: 1px solid #cfd4da; flex: none; }
.body { flex: 1; min-height: 0; }
.glabel { height: 18px; line-height: 20px; text-align: center; font-size: 11px; color: #6b7682; position: relative; white-space: nowrap; }
.launch { position: absolute; right: 5px; top: 6px; width: 7px; height: 7px; border-left: 1px solid #98a0a9; border-top: 1px solid #98a0a9; border-right: 2px solid #c2c7cd; border-bottom: 2px solid #c2c7cd; }
.g-clip { width: 95px; } .g-font { width: 209px; } .g-align { width: 167px; } .g-num { width: 88px; } .g-styles { width: 195px; } .g-cells { width: 91px; } .g-edit { width: 179px; }
.clip { display: flex; padding: 5px 0 0 7px; }
.paste { width: 48px; display: flex; flex-direction: column; align-items: center; }
.pasteic { width: 28px; height: 32px; }
.plabel { margin-top: 4px; font-size: 11px; line-height: 14px; color: #333; }
.paste .drop { margin-top: 6px; }
.clipcol { display: flex; flex-direction: column; gap: 5px; margin-left: 5px; padding-top: 2px; }
.row2 { display: flex; align-items: center; gap: 4px; }
.stack { display: flex; flex-direction: column; padding: 11px 0 0 5px; }
.line { display: flex; align-items: center; gap: 0; }
.combo { height: 22px; background: #fff; border: 1px solid #bcc2c9; display: flex; align-items: center; justify-content: space-between; padding: 0 6px 0 3px; font: 12px/20px "Open Sans", sans-serif; color: #333; }
.fname { width: 112px; font-family: "Lato", sans-serif; }
.fsize { width: 43px; margin-left: -1px; }
.bigA { width: 22px; margin-left: 6px; font: bold 16px/20px "Liberation Serif", serif; color: #333; position: relative; }
.bigA.small { font-size: 12px; margin-left: 0; text-align: center; }
.up, .down { position: absolute; right: 2px; top: 3px; width: 0; height: 0; border: 3px solid transparent; }
.up { border-bottom: 3px solid #2b66b8; border-top: 0; }
.down { border-top: 3px solid #2b66b8; border-bottom: 0; }
.l2 { margin-top: 5px; height: 24px; }
.fb { width: 23px; text-align: center; font: bold 13px/20px "Liberation Serif", serif; color: #222; }
.bb { margin-left: 3px; }
.ii { font-style: italic; }
.uu { text-decoration: underline; }
.l2 .drop { margin: 0 3px; }
.vsep { width: 1px; height: 22px; background: #d6dae0; margin: 0 8px 0 7px; }
.bord { margin-left: 3px; }
.swatch { display: flex; flex-direction: column; align-items: center; width: 16px; margin-left: -1px; }
.swatch svg { height: 12px; }
.swatch b { width: 16px; height: 4px; }
.yel { background: #ffff00; } .red { background: #e00000; }
.colA { font: bold 14px/12px "Liberation Serif", serif; color: #2b5ea8; height: 12px; }
.swatch + .drop { margin: 0 7px 0 4px; }
.aligngrid { display: grid; grid-template-columns: 23px 23px 23px 38px 20px 24px; grid-template-rows: 22px 22px; column-gap: 0; row-gap: 7px; padding: 10px 0 0 7px; align-items: center; justify-items: center; }
.ai { width: 16px; height: 16px; display: block; }
.ai.on { width: 21px; height: 21px; background: linear-gradient(#ffe08a, #fdc44f); border: 1px solid #d6a53c; border-radius: 3px; padding: 2px; margin-right: 3px; }
.ai.on svg { width: 15px; height: 15px; display: block; }
.orient { display: flex; align-items: center; gap: 2px; justify-self: start; margin-left: 5px; }
.orient svg { width: 17px; height: 15px; }
.ortext { font: bold 8px "Liberation Sans", sans-serif; fill: #333; }
.vsep.tall { grid-row: 1 / span 2; grid-column: 5; height: 46px; margin: 0; background: #d6dae0; }
.wrapic { width: 18px; height: 16px; grid-column: 6; grid-row: 1; justify-self: start; }
.indent { grid-column: 4; grid-row: 2; justify-self: end; margin-right: 2px; }
.indent svg { width: 33px; height: 16px; display: block; }
.merge { display: flex; align-items: center; gap: 3px; grid-column: 6; grid-row: 2; justify-self: start; }
.merge svg { width: 18px; height: 16px; }
.numstack { padding: 4px 0 0 5px; }
.fmt { width: 80px; height: 21px; }
.numline { margin-top: 3px; height: 20px; }
.money { display: flex; align-items: center; gap: 5px; margin-left: 4px; }
.pct { margin-left: 9px; font-size: 12px; color: #333; }
.thou { margin-left: 10px; font-size: 11px; color: #333; }
.decs { gap: 2px; margin-top: 0; margin-left: 4px; }
.dec { display: flex; align-items: center; font: 9px/9px "Liberation Sans", sans-serif; color: #333; width: 21px; }
.arrw { color: #2b66b8; font-size: 9px; width: 8px; }
.dnum { display: inline-block; }
.list { display: flex; flex-direction: column; gap: 6px; padding: 5px 0 0 8px; }
.item { display: flex; align-items: center; gap: 4px; height: 16px; font-size: 11px; color: #3f4952; white-space: nowrap; }
.item .drop { margin-left: 5px; }
.editbody { display: flex; padding: 4px 0 0 10px; }
.editcol { gap: 6px; margin-left: 0; width: 32px; padding-top: 0; }
.sigma { font: bold 15px/16px "Liberation Serif", serif; color: #222; width: 16px; text-align: center; }
.bigbtn { width: 66px; display: flex; flex-direction: column; align-items: center; margin-right: 0; }
.bigic { width: 34px; height: 30px; }
.sort { font: bold 16px "Liberation Serif", serif; }
.sort.a { fill: #3b66a8; } .sort.y { fill: #8a2f2a; }
.bl { display: block; margin-top: 7px; font-size: 11px; line-height: 13px; text-align: center; color: #3f4952; white-space: nowrap; }
.bl .drop { margin-left: 3px; }

/* formula */
.fbar { height: 27px; flex: none; display: flex; padding: 3px 0; background: #dfe4ea; }
.namebox { width: 160px; background: #fff; border: 1px solid #c4c9d0; border-left: 0; display: flex; align-items: center; padding-left: 55px; font-size: 12.500px; color: #333; position: relative; }
.namebox .drop { position: absolute; right: 6px; top: 9px; }
.fxzone { width: 85px; display: flex; align-items: center; justify-content: space-between; background: #e6e9ee; border-top: 1px solid #c4c9d0; border-bottom: 1px solid #c4c9d0; padding: 0 5px 0 0; }
.pill { width: 22px; height: 20px; background: #f2f4f7; border: 1px solid #b6bcc4; border-left-width: 2px; border-radius: 50%; display: flex; align-items: center; justify-content: center; margin-left: -1px; }
.pill i { width: 7px; height: 7px; border-radius: 50%; background: #bfc4ca; }
.fx { font: italic bold 13px "Liberation Serif", serif; color: #333; }
.finput { flex: 1; background: #fff; border: 1px solid #c4c9d0; }
.fexp { width: 19px; background: linear-gradient(#eef0f3, #d5d9df); border: 1px solid #b6bcc4; display: flex; align-items: center; justify-content: center; }
.fexp svg { width: 10px; height: 8px; }

/* sheet */
.sheet { height: 535px; flex: none; display: flex; background: #fff; }
.gridwrap { width: 1004px; padding-top: 2px; position: relative; overflow: hidden; background: #e9ecf0; }
.grid { border-collapse: collapse; table-layout: fixed; width: 1011px; font-family: "Liberation Sans", sans-serif; font-size: 10px; letter-spacing: -.35px; color: #111; background: #fff; }
.w8{width:8px}.w12{width:12px}.w13{width:13px}.w14{width:14px}.w15{width:15px}.w16{width:16px}.w17{width:17px}.w18{width:18px}.w19{width:19px}.w20{width:20px}.w23{width:23px}.w28{width:28px}.w45{width:45px}.w54{width:54px}
.h13{height:13px}.h14{height:14px}.h15{height:15px}.h16{height:16px}.h17{height:17px}.h20{height:20px}.h22{height:22px}.h23{height:23px}.h27{height:27px}
.grid th { padding: 0; font: 400 10px/11px "Open Sans", sans-serif; color: #3e4852; letter-spacing: 0; background: linear-gradient(#eceff3, #dfe3e9); border: 1px solid #b3b9c1; overflow: hidden; white-space: nowrap; text-align: center; }
.grid tbody th { vertical-align: bottom; padding-bottom: 1px; }
.grid th.sel { background: linear-gradient(#fde39b, #f8c65a); border-color: #d6a53c; color: #6a5320; }
.grid td { padding: 0 1px 0 0; border: 1px solid #000; text-align: right; vertical-align: bottom; line-height: 11px; overflow: hidden; white-space: nowrap; }
.grid td.g { border-color: #dadada; }
.grid td.kb { border-bottom: 2px solid #000; }
.grid td.xr { border-right-color: #000; }
.grid td.tb { border-bottom-color: #000; }
.grid td.l { border-left-width: 2px; }
.grid .top { border-top-width: 2px; }
.sep td { border-bottom-width: 2px; }
.grid td.head { text-align: center; font-weight: bold; font-size: 9px; vertical-align: middle; }
.grid td.c { text-align: center; vertical-align: bottom; border-bottom-width: 2px; padding: 0; }
.grid td.s { text-align: left; padding-left: 2px; border-left-width: 2px; border-right-width: 2px; font-size: 10.500px; color: #111; }
.grid td.side { vertical-align: middle; text-align: center; padding: 0; border-left-width: 2px; font-size: 9.500px; }
.grid td.nol { border-left: 1px solid #dadada; }
.rot { writing-mode: vertical-rl; transform: rotate(180deg); display: inline-block; line-height: 11px; }
.grid td.v { background: #ffff00; border: 2px solid #000; padding-right: 2px; }
.grid td.pri { vertical-align: middle; text-align: center; border: 2px solid #000; padding: 0; font-size: 9px; }
.grid td.strat { vertical-align: middle; text-align: center; border: 2px solid #000; padding: 0; font-size: 9px; }
.grid td.box { border: 1px solid #000; }
.grid td.q { text-align: left; font-weight: bold; font-size: 9.500px; padding-left: 3px; }
.grid td.zn { text-align: left; padding-left: 2px; font-size: 9.500px; }
.grid td.t { text-align: left; padding-left: 3px; font-size: 9.500px; }
.grid td.num { border-left-width: 2px; border-right-width: 1px; border-bottom: 1px solid #000; padding-right: 2px; }
.grid td.first { border-top-width: 2px; }
.grid td.vt { text-align: left; vertical-align: bottom; padding: 0 0 0 1px; font-size: 9.500px; }
.chart { position: absolute; left: 435px; top: 396px; width: 640px; height: 160px; margin: 0; background: #fff; border: 1px solid #868686; }
.chartsvg { display: block; width: 620px; height: 140px; }
.gl { stroke: #868686; fill: none; }
.bar { fill: #4f81bd; }
.bar2 { fill: #c0504d; }
.ax { font: 10px "Liberation Sans", sans-serif; fill: #111; }
.vscroll { width: 20px; flex: none; background: #dfe3ea; display: flex; flex-direction: column; align-items: center; border-left: 1px solid #c4c9d0; position: relative; }
.split { width: 15px; height: 6px; margin-top: 2px; background: #fff; border: 1px solid #8f969e; border-radius: 1px; }
.arrow { width: 0; height: 0; border: 5px solid transparent; margin: 6px 0 0; }
.arrow.up { border-bottom: 6px solid #4d565f; border-top: 0; }
.arrow.down { position: absolute; bottom: 6px; border-top: 6px solid #4d565f; border-bottom: 0; left: 4px; }
.thumb { width: 16px; height: 131px; margin-top: 7px; background: linear-gradient(90deg, #f1f3f6, #e2e6ec); border: 1px solid #a0a7b0; border-radius: 2px; display: flex; align-items: center; justify-content: center; }
.thumb i { width: 9px; height: 7px; border-top: 1px solid #70787f; border-bottom: 1px solid #70787f; background: linear-gradient(#70787f, #70787f) center / 100% 1px no-repeat; }

/* sheet bar */
.sheetbar { height: 17px; flex: none; display: flex; background: #dfe3e9; border-top: 1px solid #b8bdc5; border-bottom: 1px solid #b8bdc5; }
.tabnav { width: 62px; display: flex; justify-content: space-around; font: 8px/15px "DejaVu Sans", sans-serif; color: #555; padding-left: 2px; }
.sheettabs { display: flex; width: 538px; }
.st { padding: 0 14px 0 12px; font: 13px/15px "Open Sans", sans-serif; color: #6a7480; border-right: 1px solid #a9afb7; }
.st.on { background: #fff; color: #444; font-weight: 700; padding: 0 10px 0 9px; font-size: 12.500px; margin-top: -1px; height: 16px; }
.st.add { padding: 0 12px 0 8px; display: flex; align-items: center; }
.st.add svg { width: 16px; height: 14px; }
.hscroll { flex: 1; display: flex; align-items: center; position: relative; }
.hsplit { width: 5px; height: 13px; background: #fff; border: 1px solid #8f969e; border-radius: 1px; }
.harrow { width: 0; height: 0; border: 5px solid transparent; }
.harrow.left { border-right: 6px solid #4d565f; border-left: 0; margin-left: 7px; }
.harrow.right { border-left: 6px solid #4d565f; border-right: 0; margin-left: 62px; }
.hscroll .hsplit:last-child { margin-left: 6px; }
.hthumb { width: 298px; height: 15px; margin-left: 5px; background: linear-gradient(#f1f3f6, #dde1e7); border: 1px solid #a0a7b0; border-radius: 2px; display: flex; align-items: center; justify-content: center; }
.hthumb i { width: 7px; height: 8px; border-left: 1px solid #70787f; border-right: 1px solid #70787f; background: linear-gradient(#70787f, #70787f) center / 1px 100% no-repeat; }

/* status */
.status { height: 21px; flex: none; display: flex; align-items: center; background: linear-gradient(#e3e6eb, #cfd3d9); }
.ready { width: 55px; padding-left: 9px; font-size: 11px; line-height: 21px; border-right: 1px solid #a5abb3; color: #4a4f55; }
.statright { margin-left: auto; width: 235px; height: 21px; border-left: 1px solid #a5abb3; display: flex; align-items: center; padding-left: 4px; }
.vb { width: 18px; height: 19px; display: flex; align-items: center; justify-content: center; margin-right: 2px; }
.vb svg { width: 14px; height: 12px; }
.vb.on { background: linear-gradient(#ffe9a8, #fdd36a); border: 1px solid #d6a53c; border-radius: 2px; }
.zoomv { margin-left: 9px; font-size: 11px; width: 29px; color: #4a4f55; }
.zb { width: 15px; height: 15px; border-radius: 50%; border: 1px solid #8f969e; background: #f1f3f6; font: bold 13px/12px "Liberation Sans", sans-serif; text-align: center; color: #555; }
.slider { width: 101px; height: 1px; background: #9fa6ae; position: relative; }
.slider .mid { position: absolute; left: 50px; top: -3px; width: 1px; height: 7px; background: #9fa6ae; }
.slider .knob { position: absolute; left: 30px; top: -5px; width: 8px; height: 11px; background: #f1f3f6; border: 1px solid #6f767e; border-radius: 1px 1px 4px 4px; }

/* taskbar */
.taskbar { height: 30px; flex: none; display: flex; align-items: center; background: linear-gradient(#4a8df2 0, #2e6fe4 12%, #2a66dc 85%, #1d4fb8 100%); position: relative; }
.start { width: 96px; height: 30px; flex: none; display: flex; align-items: center; gap: 7px; padding-left: 10px; background: linear-gradient(#4ba24b, #2f8a30 50%, #3a8f3a); border-radius: 0 14px 14px 0; box-shadow: inset 0 1px 2px #8ccc8c; }
.start svg { width: 18px; height: 18px; }
.start em { font: italic bold 16px "Liberation Sans", sans-serif; color: #fff; }
.tasks { display: flex; margin-left: 9px; gap: 1px; }
.task { width: 159px; height: 24px; display: flex; align-items: center; gap: 4px; padding-left: 10px; background: #3a7bee; border: 1px solid #2458c4; border-radius: 2px; color: #fff; font-size: 11px; white-space: nowrap; }
.task svg { width: 16px; height: 16px; flex: none; }
.task.active { background: #1e50b4; border-color: #173f92; padding-left: 11px; gap: 6px; }
.lang { margin-left: 105px; width: 14px; text-align: center; color: #fff; font-size: 10.500px; }
.tray { margin-left: auto; width: 146px; height: 30px; display: flex; align-items: center; gap: 3px; padding-left: 0; background: linear-gradient(#2ea4ee, #1493e6 50%, #0f86dc); border-left: 1px solid #0d6fc6; }
.back { width: 18px; height: 18px; margin-left: -9px; flex: none; }
.back svg { width: 18px; height: 18px; display: block; }
.trayic { width: 16px; height: 16px; flex: none; }
.clock { margin-left: 6px; color: #fff; font-size: 11.500px; }
```
